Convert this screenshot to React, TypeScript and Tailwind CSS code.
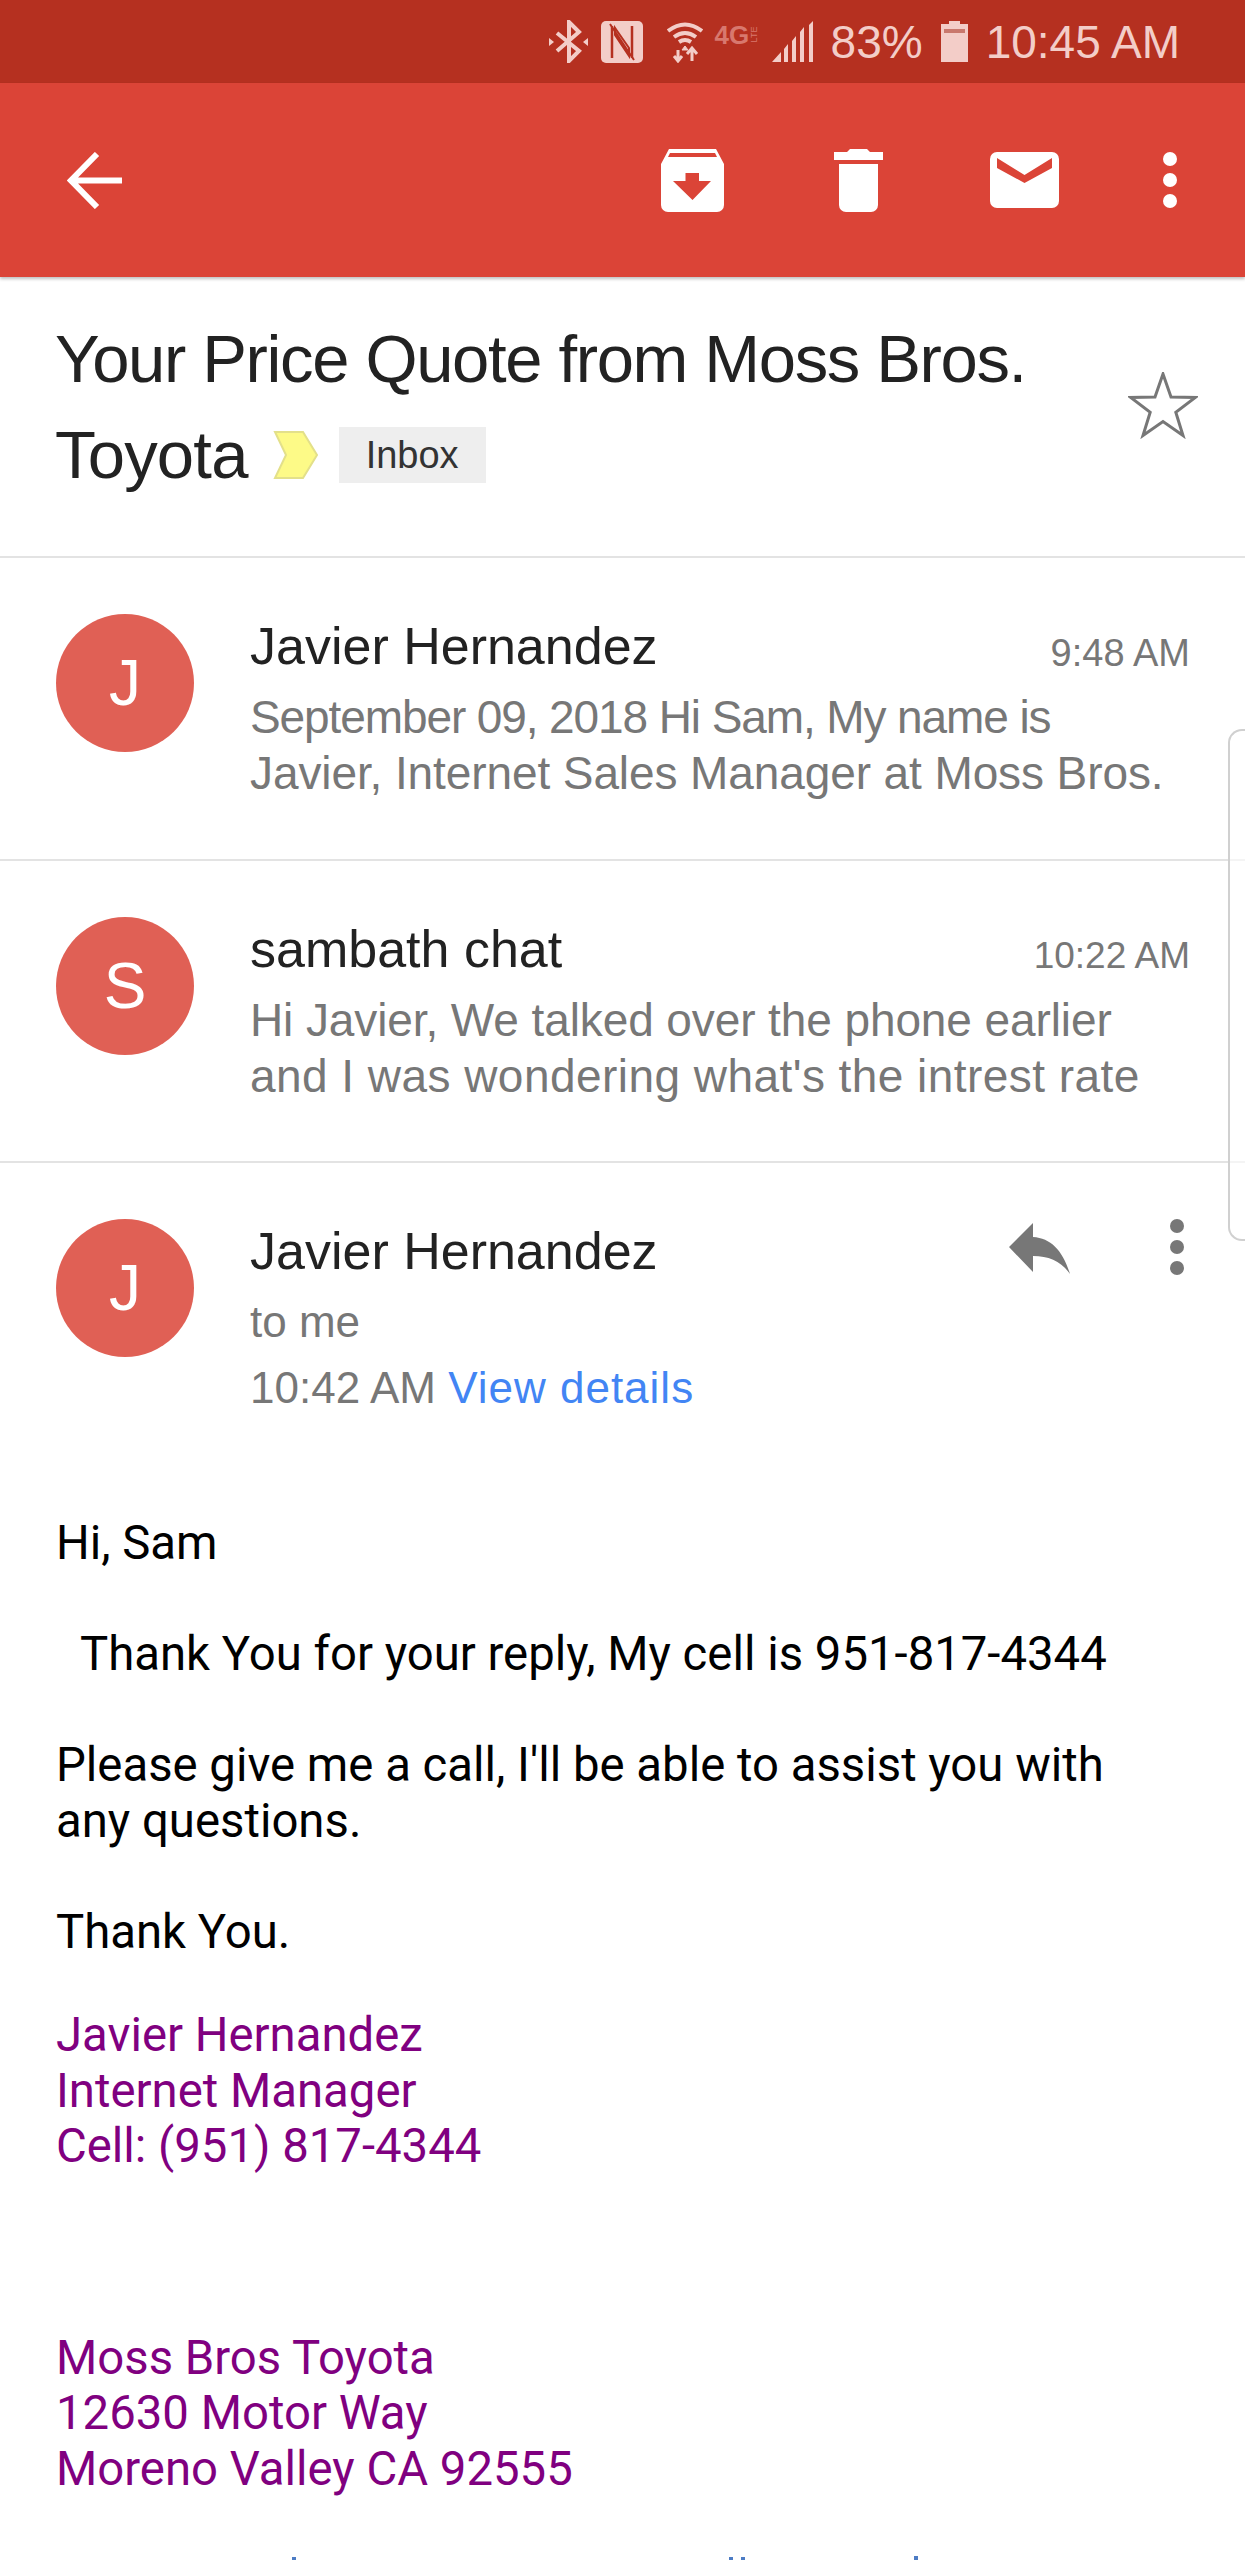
import React from "react";

const hand = "font-['Liberation_Sans',sans-serif]";

function Dots({ cls }: { cls: string }) {
  return (
    <div className="flex flex-col gap-[7px]">
      <span className={`w-[14px] h-[14px] rounded-full ${cls}`} />
      <span className={`w-[14px] h-[14px] rounded-full ${cls}`} />
      <span className={`w-[14px] h-[14px] rounded-full ${cls}`} />
    </div>
  );
}

function Avatar({ ch }: { ch: string }) {
  return (
    <div className={`w-[138px] h-[138px] shrink-0 rounded-full bg-[#e06055] flex items-center justify-center text-white text-[64px] ${hand}`}>
      {ch}
    </div>
  );
}

function Row({
  ch,
  name,
  time,
  l1,
  l2,
  h,
  t1,
  t2,
  tm,
}: {
  ch: string;
  name: string;
  time: string;
  l1: string;
  l2: string;
  h: string;
  t1: string;
  t2: string;
  tm: string;
}) {
  return (
    <div className={`${h} border-b-2 border-[#e3e3e3] flex pl-[56px] pr-[55px] pt-[56px] gap-[56px]`}>
      <Avatar ch={ch} />
      <div className={`flex-1 ${hand}`}>
        <div className="flex justify-between items-end h-[64px]">
          <span className="text-[52px] leading-[64px] text-[#222]">{name}</span>
          <span className={`${tm} leading-[50px] text-[#777]`}>{time}</span>
        </div>
        <div className={`text-[46px] leading-[56px] text-[#777] mt-[11px] whitespace-nowrap ${t1}`}>{l1}</div>
        <div className={`text-[46px] leading-[56px] text-[#777] whitespace-nowrap ${t2}`}>{l2}</div>
      </div>
    </div>
  );
}

export default function App() {
  return (
    <div className="relative w-[1245px] h-[2560px] overflow-hidden bg-white">
      <div className="h-[83px] bg-[#b53020] flex items-center justify-end pr-[65px] text-[#f3cdc8]">
        <svg width="39" height="43" viewBox="0 0 39 43" className="mr-[13px]" fill="none" stroke="#f3cdc8" strokeWidth="4">
          <path d="M8 13l22 18-10 10V2l10 10L8 31" />
          <path d="M0 18l5 4-5 4zM39 18l-5 4 5 4z" fill="#f3cdc8" stroke="none" />
        </svg>
        <svg width="42" height="42" viewBox="0 0 42 42" className="mr-[24px]">
          <rect width="42" height="42" rx="5" fill="#f3cdc8" />
          <path d="M11 5v32M31 5v32" stroke="#b53020" strokeWidth="2.500" fill="none" />
          <path d="M9 3l24 36M14 14l14 21V27L14 7z" stroke="#b53020" strokeWidth="2" fill="none" />
        </svg>
        <svg width="36" height="43" viewBox="0 0 36 43" fill="none" stroke="#f3cdc8" strokeWidth="4" className="mr-[12px]">
          <path d="M1 11q17-13 34 0M7 17q11-8 22 0M12 22q6-4 12 0" />
          <path d="M18 26l-3 4h6z" fill="#f3cdc8" strokeWidth="1" />
          <path d="M11 30v11M7 36l4 5 4-5M25 41V29M20 34l5-6 5 6" strokeWidth="3" />
        </svg>
        <div className={`w-[48px] h-[20px] mr-[9px] -mt-[14px] flex items-center text-[#d8786e] font-bold ${hand}`}>
          <span className="text-[26px] leading-none">4G</span>
          <span className="text-[9px] leading-none font-normal -rotate-90 -ml-[2px]">LTE</span>
        </div>
        <svg width="42" height="41" viewBox="0 0 42 41" fill="#f3cdc8" className="mr-[17px]">
          <path d="M0 41l9-10v10zM12 28l4-5v18h-4zM20 20l4-5v26h-4zM28 11l4-5v35h-4zM37 4l4-4v41h-4z" />
        </svg>
        <span className={`text-[46px] leading-none mr-[18px] ${hand}`}>83%</span>
        <svg width="27" height="41" viewBox="0 0 27 41" fill="#f3cdc8" className="mr-[18px]">
          <path d="M8 0h11v3h8v38H0V3h8z" />
          <rect x="3" y="8" width="21" height="4" fill="#c9786d" />
        </svg>
        <span className={`text-[46px] leading-none ${hand}`}>10:45 AM</span>
      </div>

      <div className="h-[194px] bg-[#db4437] flex items-center pl-[67px] pr-[68px] shadow-[0_2px_3px_rgba(0,0,0,0.25)] relative">
        <svg width="55" height="57" viewBox="0 0 55 57" fill="none" stroke="#fff" strokeWidth="6">
          <path d="M55 28.500H4M30 2L4 28.500 30 55" />
        </svg>
        <div className="flex items-center ml-auto">
          <svg width="63" height="63" viewBox="0 0 63 63" className="mr-[110px]">
            <path d="M8 0h47l8 15v41a7 7 0 0 1-7 7H7a7 7 0 0 1-7-7V15z" fill="#fff" />
            <path d="M7 8h49l-2-4H9z" fill="#db4437" />
            <path d="M24.500 24H38v8h12L31.500 51 12 32h12.500z" fill="#db4437" />
          </svg>
          <svg width="49" height="63" viewBox="0 0 49 63" className="mr-[107px]" fill="#fff">
            <path d="M0 3h13l3-3h17l3 3h13v8H0zM5 15h39v41a7 7 0 0 1-7 7H12a7 7 0 0 1-7-7z" />
          </svg>
          <svg width="69" height="56" viewBox="0 0 69 56" className="mr-[104px]">
            <rect width="69" height="56" rx="7" fill="#fff" />
            <path d="M7 6l27.500 17L62 6v10L34.500 31 7 16z" fill="#db4437" />
          </svg>
          <Dots cls="bg-white" />
        </div>
      </div>

      <div className="h-[281px] border-b-2 border-[#e3e3e3] flex justify-between pl-[55px] pr-[47px]">
        <div className={`text-[67px] leading-[96px] text-[#222] pt-[34px] whitespace-nowrap ${hand}`}>
          <div className="tracking-[-1.350px]">Your Price Quote from Moss Bros.</div>
          <div className="flex items-center tracking-[-0.800px]">
            Toyota
            <svg width="46" height="50" viewBox="0 0 46 50" className="ml-[25px] shrink-0">
              <path d="M2 2h28l14 23-14 23H2l11-23z" fill="#fdfa87" stroke="#e3e08a" strokeWidth="2" />
            </svg>
            <span className="ml-[20px] bg-[#eeeeee] text-[38px] tracking-normal leading-[56px] w-[147px] text-center h-[56px] text-[#333]">Inbox</span>
          </div>
        </div>
        <svg width="70" height="67" viewBox="0 0 70 67" fill="none" stroke="#777" strokeWidth="3" className="mt-[95px]">
          <path d="M35 2 43 25 67.300 25.500 47.800 40.200 55 63.500 35 49.500 15 63.500 22.200 40.200 2.700 25.500 27 25z" />
        </svg>
      </div>

      <Row
        h="h-[303px]"
        ch="J"
        name="Javier Hernandez"
        time="9:48 AM"
        tm="text-[38px]"
        l1="September 09, 2018 Hi Sam, My name is"
        t1="tracking-[-1.100px]"
        l2="Javier, Internet Sales Manager at Moss Bros."
        t2="tracking-[-0.100px]"
      />
      <Row
        h="h-[302px]"
        ch="S"
        name="sambath chat"
        time="10:22 AM"
        tm="text-[37px]"
        l1="Hi Javier, We talked over the phone earlier"
        t1="tracking-[-0.100px]"
        l2="and I was wondering what's the intrest rate"
        t2="tracking-[0.450px]"
      />

      <div className={`flex pl-[56px] pr-[55px] pt-[56px] gap-[56px] h-[286px] ${hand}`}>
        <Avatar ch="J" />
        <div className="flex-1">
          <div className="text-[52px] leading-[64px] text-[#222]">Javier Hernandez</div>
          <div className="text-[44px] leading-[56px] text-[#777] mt-[11px]">to me</div>
          <div className="text-[44px] leading-[56px] text-[#777] mt-[10px]">
            10:42 AM <span className="text-[#4285f4] tracking-[1px]">View details</span>
          </div>
        </div>
        <div className="flex items-start gap-[100px] pr-[6px]">
          <svg width="61" height="51" viewBox="0 0 61 51" className="mt-[4px]" fill="#777">
            <path d="M24 0v14c18 1 30 14 37 37C52 38 40 33 24 33v16L0 24z" />
          </svg>
          <Dots cls="bg-[#777]" />
        </div>
      </div>

      <div className="px-[56px] text-[47.300px] leading-[55.500px] text-black font-['Roboto',sans-serif]">
        <p className="mt-[67px]">Hi, Sam</p>
        <p className="mt-[55.500px] pl-[24px]">Thank You for your reply, My cell is 951-817-4344</p>
        <p className="mt-[55.500px]">
          Please give me a call, I'll be able to assist you with
          <br />
          any questions.
        </p>
        <p className="mt-[55.500px]">Thank You.</p>
        <p className="mt-[48px] text-[#800080]">
          Javier Hernandez
          <br />
          Internet Manager
          <br />
          Cell: (951) 817-4344
        </p>
        <p className="mt-[156px] text-[#800080]">
          Moss Bros Toyota
          <br />
          12630 Motor Way
          <br />
          Moreno Valley CA 92555
        </p>
      </div>

      <div className="absolute right-0 top-[729px] w-[17px] h-[512px] rounded-l-[14px] border-2 border-r-0 border-[#d0d0d0] bg-white/60" />
      <span className="absolute left-[292px] top-[2557px] w-[4px] h-[3px] bg-[#4d7cc4]" />
      <span className="absolute left-[729px] top-[2557px] w-[4px] h-[3px] bg-[#4d7cc4]" />
      <span className="absolute left-[741px] top-[2557px] w-[4px] h-[3px] bg-[#4d7cc4]" />
      <span className="absolute left-[914px] top-[2556px] w-[4px] h-[4px] bg-[#4d7cc4]" />
    </div>
  );
}
